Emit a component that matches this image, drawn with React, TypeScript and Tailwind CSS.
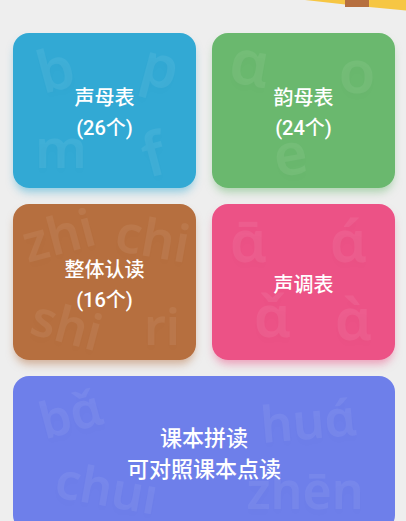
const letterBase =
  "absolute -translate-x-1/2 -translate-y-1/2 leading-none whitespace-nowrap font-semibold font-['Noto_Sans'] text-white/[0.065] [text-shadow:0_5px_6px_rgba(0,0,0,0.012)]";

function Card({ className, children }: { className: string; children: React.ReactNode }) {
  return (
    <div className={"relative flex h-[155.6px] items-center justify-center overflow-hidden rounded-2xl " + className}>
      {children}
    </div>
  );
}

function Label({ lines }: { lines: string[] }) {
  return (
    <div className="relative flex flex-col items-center pt-[5px] text-[20px] font-medium leading-[30px] text-white">
      {lines.map((l) => (
        <div key={l}>{l}</div>
      ))}
    </div>
  );
}

export default function App() {
  return (
    <div className="relative h-[521px] w-[406px] overflow-hidden bg-[#eeeeee] font-['Roboto','Noto_Sans_CJK_SC',sans-serif]">
      <svg className="absolute right-0 top-0" width="101" height="11" viewBox="0 0 101 11">
        <path d="M0 0 L101 0 L101 10.5 Q50 6 0 0 Z" fill="#f6c643" />
        <rect x="40" y="0" width="24" height="7" fill="#b66f3f" />
      </svg>

      <div className="grid grid-cols-2 gap-x-4 gap-y-4 pl-[13px] pr-[11px] pt-[32.7px]">
        <div className="rounded-2xl shadow-[0_6px_8px_-2px_rgba(50,169,212,0.5)]">
          <Card className="bg-[#32a9d4]">
            <span className={letterBase + " left-[42px] top-[35px] -rotate-[15deg] text-[58px]"}>b</span>
            <span className={letterBase + " left-[148px] top-[32px] rotate-[15deg] text-[58px]"}>p</span>
            <span className={letterBase + " left-[48px] top-[114px] text-[54px]"}>m</span>
            <span className={letterBase + " left-[140px] top-[120px] -rotate-[15deg] text-[60px]"}>f</span>
            <Label lines={["声母表", "(26个)"]} />
          </Card>
        </div>
        <div className="rounded-2xl shadow-[0_6px_8px_-2px_rgba(106,184,110,0.5)]">
          <Card className="bg-[#6ab86e]">
            <span className={letterBase + " left-[38px] top-[28px] rotate-[10deg] text-[62px]"}>ɑ</span>
            <span className={letterBase + " left-[145px] top-[37px] text-[60px]"}>o</span>
            <span className={letterBase + " left-[78px] top-[120px] -rotate-[10deg] text-[58px]"}>e</span>
            <Label lines={["韵母表", "(24个)"]} />
          </Card>
        </div>
        <div className="rounded-2xl shadow-[0_6px_8px_-2px_rgba(182,111,63,0.5)]">
          <Card className="bg-[#b66f3f]">
            <span className={letterBase + " left-[45px] top-[30px] -rotate-[15deg] text-[52px]"}>zhi</span>
            <span className={letterBase + " left-[140px] top-[33px] rotate-[10deg] text-[52px]"}>chi</span>
            <span className={letterBase + " left-[54px] top-[120px] rotate-[15deg] text-[50px]"}>shi</span>
            <span className={letterBase + " left-[149px] top-[122px] text-[50px]"}>ri</span>
            <Label lines={["整体认读", "(16个)"]} />
          </Card>
        </div>
        <div className="rounded-2xl shadow-[0_6px_8px_-2px_rgba(236,82,134,0.5)]">
          <Card className="bg-[#ec5286]">
            <span className={letterBase + " left-[36px] top-[36px] text-[58px]"}>ɑ̄</span>
            <span className={letterBase + " left-[136px] top-[36px] text-[58px]"}>ɑ́</span>
            <span className={letterBase + " left-[60px] top-[111px] text-[58px]"}>ɑ̌</span>
            <span className={letterBase + " left-[141px] top-[114px] text-[58px]"}>ɑ̀</span>
            <Label lines={["声调表"]} />
          </Card>
        </div>
        <div className="col-span-2 rounded-2xl">
          <Card className="bg-[#6e7fea]">
            <span className={letterBase + " left-[57px] top-[37px] -rotate-[15deg] text-[50px]"}>bɑ̌</span>
            <span className={letterBase + " left-[295px] top-[44px] -rotate-[5deg] text-[50px]"}>huɑ́</span>
            <span className={letterBase + " left-[94px] top-[111px] rotate-[10deg] text-[50px]"}>chuı</span>
            <span className={letterBase + " left-[292px] top-[114px] text-[50px]"}>zhēn</span>
            <div className="relative flex flex-col items-center text-[22px] font-medium leading-[31px] text-white">
              <div>课本拼读</div>
              <div>可对照课本点读</div>
            </div>
          </Card>
        </div>
      </div>
    </div>
  );
}
